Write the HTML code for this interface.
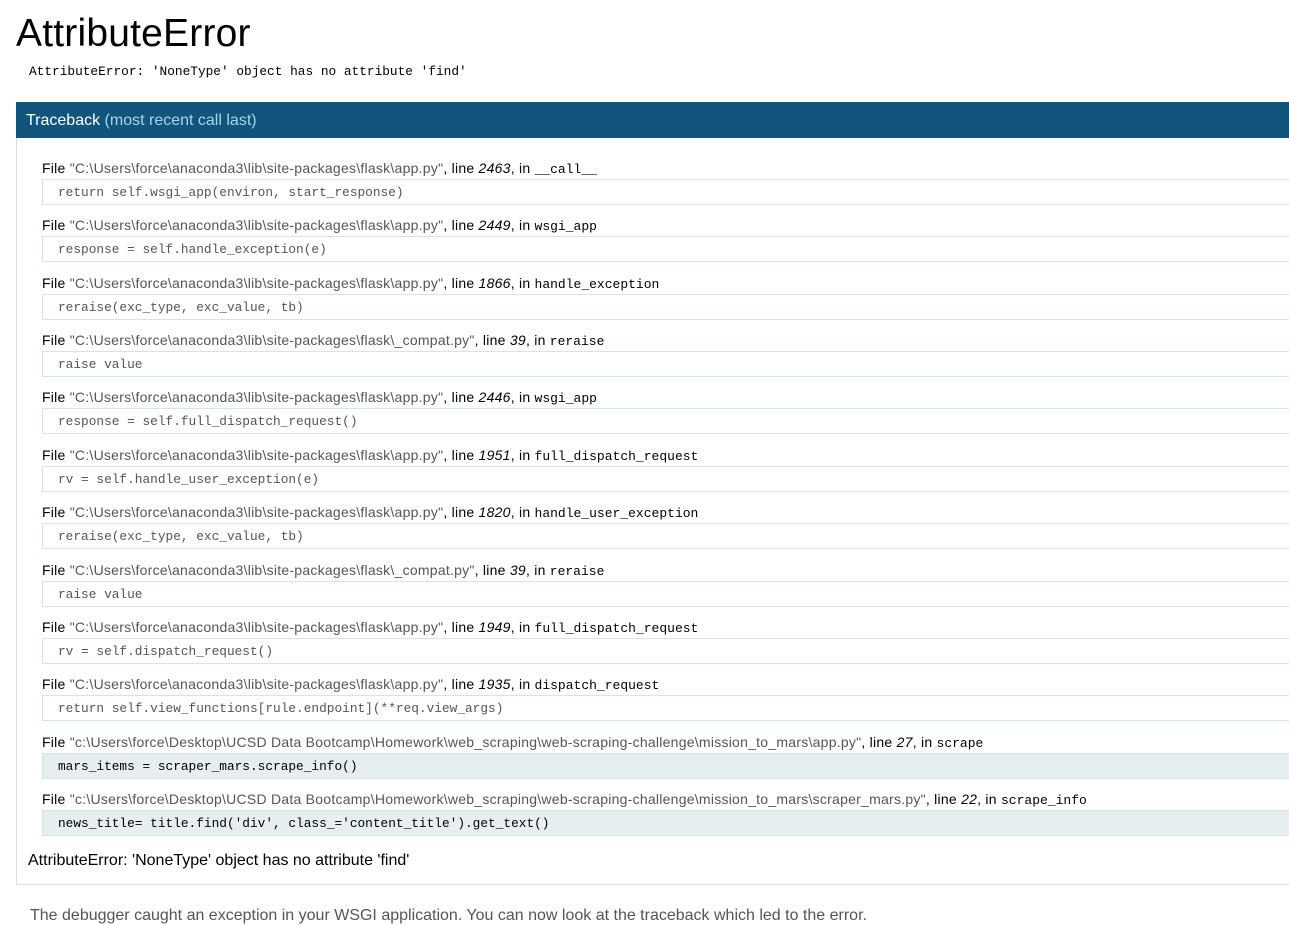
<!DOCTYPE html>
<html><head><meta charset="utf-8"><style>
body{margin:0;background:#fff;font-family:"Liberation Sans",sans-serif;color:#000;width:1289px;height:913px;overflow:hidden;position:relative}
h1{position:absolute;left:16px;top:12px;margin:0;font-weight:normal;font-size:39px;letter-spacing:0.2px}
.exc{position:absolute;left:29px;top:64px;font-family:"Liberation Mono",monospace;font-size:12.8px}
.hdr{position:absolute;left:16px;top:102px;width:1273px;height:36px;background:#11557c;color:#fff;font-size:16px;line-height:38px;padding-left:10px;box-sizing:border-box}
.hdr span{color:#a8d5e8}
.box{position:absolute;left:16px;top:138px;width:1290px;height:747px;border:1px solid #ddd;border-top:none;box-sizing:border-box}
.fr{position:absolute;left:42px;width:1260px}
.fl{font-size:14px;letter-spacing:0.25px;height:22px;line-height:22px;white-space:nowrap}
.fl .f{color:#555}
.fl .fn{font-family:"Liberation Mono",monospace;letter-spacing:0;font-size:13px}
.cd{height:26px;border:1px solid #d4e5ea;box-sizing:border-box;font-family:"Liberation Mono",monospace;font-size:12.8px;color:#555;line-height:26px;padding-left:15px;white-space:pre}
.cd.hl{background:#e7eeef;color:#000}
.last{position:absolute;left:28px;top:852px;font-size:16px}
.foot{position:absolute;left:30px;top:907px;font-size:16px;color:#555}
</style></head><body>
<h1>AttributeError</h1>
<div class="exc">AttributeError: 'NoneType' object has no attribute 'find'</div>
<div class="hdr">Traceback <span>(most recent call last)</span></div>
<div class="box"></div>

<div class="fr" style="top:157px"><div class="fl">File <span class="f">"C:\Users\force\anaconda3\lib\site-packages\flask\app.py"</span>, line <i>2463</i>, in <span class="fn">__call__</span></div><div class="cd">return self.wsgi_app(environ, start_response)</div></div>
<div class="fr" style="top:214.4px"><div class="fl">File <span class="f">"C:\Users\force\anaconda3\lib\site-packages\flask\app.py"</span>, line <i>2449</i>, in <span class="fn">wsgi_app</span></div><div class="cd">response = self.handle_exception(e)</div></div>
<div class="fr" style="top:271.7px"><div class="fl">File <span class="f">"C:\Users\force\anaconda3\lib\site-packages\flask\app.py"</span>, line <i>1866</i>, in <span class="fn">handle_exception</span></div><div class="cd">reraise(exc_type, exc_value, tb)</div></div>
<div class="fr" style="top:329.1px"><div class="fl">File <span class="f">"C:\Users\force\anaconda3\lib\site-packages\flask\_compat.py"</span>, line <i>39</i>, in <span class="fn">reraise</span></div><div class="cd">raise value</div></div>
<div class="fr" style="top:386.4px"><div class="fl">File <span class="f">"C:\Users\force\anaconda3\lib\site-packages\flask\app.py"</span>, line <i>2446</i>, in <span class="fn">wsgi_app</span></div><div class="cd">response = self.full_dispatch_request()</div></div>
<div class="fr" style="top:443.8px"><div class="fl">File <span class="f">"C:\Users\force\anaconda3\lib\site-packages\flask\app.py"</span>, line <i>1951</i>, in <span class="fn">full_dispatch_request</span></div><div class="cd">rv = self.handle_user_exception(e)</div></div>
<div class="fr" style="top:501.2px"><div class="fl">File <span class="f">"C:\Users\force\anaconda3\lib\site-packages\flask\app.py"</span>, line <i>1820</i>, in <span class="fn">handle_user_exception</span></div><div class="cd">reraise(exc_type, exc_value, tb)</div></div>
<div class="fr" style="top:558.5px"><div class="fl">File <span class="f">"C:\Users\force\anaconda3\lib\site-packages\flask\_compat.py"</span>, line <i>39</i>, in <span class="fn">reraise</span></div><div class="cd">raise value</div></div>
<div class="fr" style="top:615.9px"><div class="fl">File <span class="f">"C:\Users\force\anaconda3\lib\site-packages\flask\app.py"</span>, line <i>1949</i>, in <span class="fn">full_dispatch_request</span></div><div class="cd">rv = self.dispatch_request()</div></div>
<div class="fr" style="top:673.2px"><div class="fl">File <span class="f">"C:\Users\force\anaconda3\lib\site-packages\flask\app.py"</span>, line <i>1935</i>, in <span class="fn">dispatch_request</span></div><div class="cd">return self.view_functions[rule.endpoint](**req.view_args)</div></div>
<div class="fr" style="top:730.6px"><div class="fl">File <span class="f">"c:\Users\force\Desktop\UCSD Data Bootcamp\Homework\web_scraping\web-scraping-challenge\mission_to_mars\app.py"</span>, line <i>27</i>, in <span class="fn">scrape</span></div><div class="cd hl">mars_items = scraper_mars.scrape_info()</div></div>
<div class="fr" style="top:788px"><div class="fl">File <span class="f">"c:\Users\force\Desktop\UCSD Data Bootcamp\Homework\web_scraping\web-scraping-challenge\mission_to_mars\scraper_mars.py"</span>, line <i>22</i>, in <span class="fn">scrape_info</span></div><div class="cd hl">news_title= title.find('div', class_='content_title').get_text()</div></div>

<div class="last">AttributeError: 'NoneType' object has no attribute 'find'</div>
<div class="foot">The debugger caught an exception in your WSGI application. You can now look at the traceback which led to the error.</div>
</body></html>
